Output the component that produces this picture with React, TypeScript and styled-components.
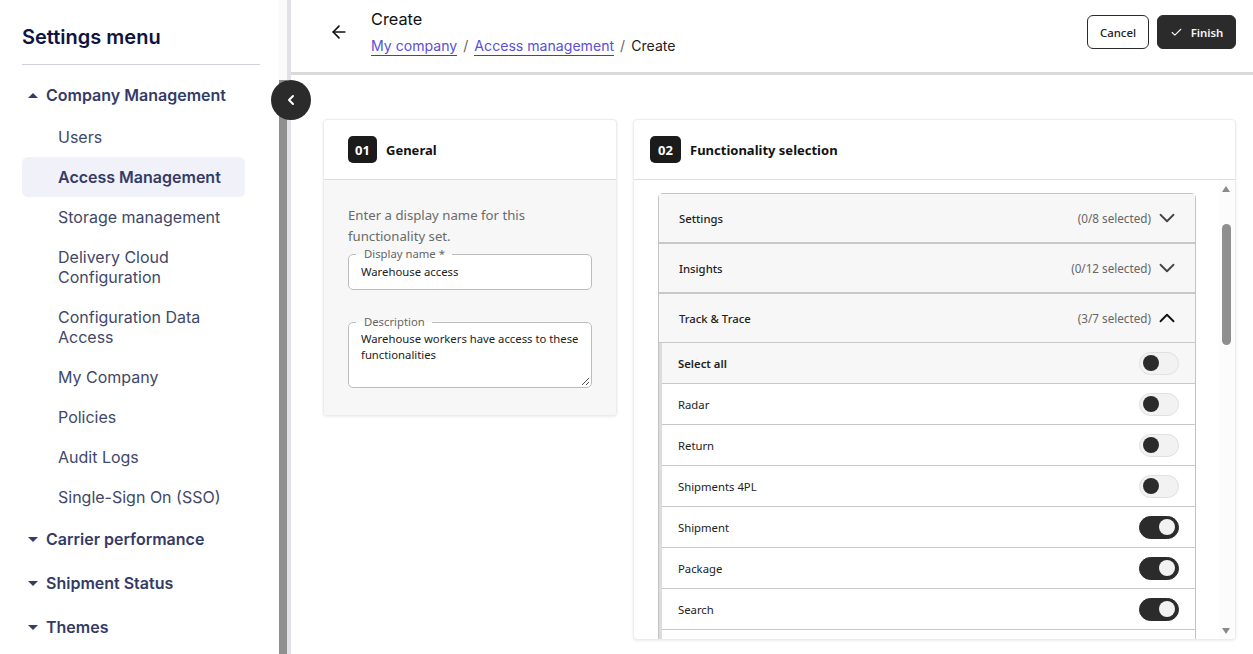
import React from "react";
import styled, { createGlobalStyle } from "styled-components";
import { ArrowLeft, Check, ChevronDown, ChevronLeft, ChevronUp } from "lucide-react";

const UI_FONT = `"Noto Sans", "Open Sans", sans-serif`;
const MENU_FONT = `Inter, "Liberation Sans", sans-serif`;

const GlobalStyle = createGlobalStyle`
  html, body { margin: 0; padding: 0; height: 100%; overflow: hidden; background: #fff; }
  #root { height: 100%; }
  * { box-sizing: border-box; }
`;

const Page = styled.div`
  position: relative;
  display: flex;
  width: 1253px;
  height: 654px;
  overflow: hidden;
`;

const Sidebar = styled.aside`
  flex: 0 0 279px;
  padding: 22px 0 0 22px;
  font-family: ${MENU_FONT};
  overflow: hidden;
`;

const SidebarTitle = styled.h1`
  width: 238px;
  margin: 0 0 8px;
  padding-bottom: 12px;
  border-bottom: 1px solid #cfd0dc;
  font-size: 20px;
  line-height: 30px;
  font-weight: 600;
  color: #0e1442;
`;

const Group = styled.div`
  display: flex;
  align-items: center;
  height: 44px;
  padding-left: 6px;
  gap: 8px;
  font-size: 16px;
  font-weight: 600;
  color: #343b66;
`;

const Caret = styled.span<{ $up?: boolean }>`
  width: 0;
  height: 0;
  border-left: 5px solid transparent;
  border-right: 5px solid transparent;
  ${(p) => (p.$up ? "border-bottom: 5px solid #343b66;" : "border-top: 5px solid #343b66;")}
`;

const SubList = styled.div`
  display: flex;
  flex-direction: column;
  width: 223px;
`;

const SubItem = styled.div<{ $active?: boolean }>`
  padding: 10px 12px 10px 36px;
  border-radius: 6px;
  font-size: 16px;
  line-height: 20px;
  font-weight: ${(p) => (p.$active ? 600 : 400)};
  color: ${(p) => (p.$active ? "#343b66" : "#414868")};
  background: ${(p) => (p.$active ? "#f0f1f9" : "transparent")};
`;

const SideScroll = styled.div`
  flex: 0 0 8px;
  display: flex;
  flex-direction: column;
  padding-top: 80px;
  background: #fafafa;
`;

const SideThumb = styled.div`
  flex: 1;
  background: #8f8f8f;
`;

const SideEdge = styled.div`
  flex: 0 0 4px;
  background: #e1e1e9;
`;

const CollapseButton = styled.button`
  position: absolute;
  left: 271px;
  top: 80px;
  display: flex;
  align-items: center;
  justify-content: center;
  width: 40px;
  height: 40px;
  padding: 0;
  border: 0;
  border-radius: 50%;
  background: #2b2b2b;
  color: #fff;
`;

const Main = styled.main`
  flex: 1;
  display: flex;
  flex-direction: column;
  min-width: 0;
`;

const Header = styled.header`
  display: flex;
  align-items: center;
  height: 75px;
  padding: 0 17px 8px 38px;
  border-bottom: 3px solid #dadada;
  font-family: ${MENU_FONT};
`;

const BackIcon = styled(ArrowLeft)`
  margin-right: 22px;
  color: #111;
`;

const HeaderText = styled.div`
  flex: 1;
  display: flex;
  flex-direction: column;
  gap: 8px;
`;

const HeaderTitle = styled.div`
  font-size: 16.3px;
  line-height: 20px;
  color: #111;
`;

const Crumbs = styled.div`
  display: flex;
  align-items: center;
  gap: 6px;
  font-size: 14.1px;
  line-height: 18px;
  color: #222;
`;

const CrumbLink = styled.a`
  color: #5b50d8;
  border-bottom: 1px solid #3f3fc4;
`;

const CrumbSep = styled.span`
  color: #666;
`;

const HeaderActions = styled.div`
  display: flex;
  gap: 8px;
  font-family: ${UI_FONT};
`;

const ActionButton = styled.button<{ $primary?: boolean }>`
  display: flex;
  align-items: center;
  justify-content: center;
  gap: 8px;
  height: 34px;
  padding: 0;
  width: ${(p) => (p.$primary ? "79px" : "62px")};
  border: 1px solid #2b2b2b;
  border-radius: 6px;
  font-family: inherit;
  font-size: 11.4px;
  font-weight: ${(p) => (p.$primary ? 600 : 500)};
  color: ${(p) => (p.$primary ? "#f5f5f5" : "#222")};
  background: ${(p) => (p.$primary ? "#2b2b2b" : "#fff")};
`;

const Content = styled.div`
  flex: 1;
  display: flex;
  align-items: flex-start;
  gap: 16px;
  min-height: 0;
  padding: 44px 17px 14px 32px;
  font-family: ${UI_FONT};
`;

const Card = styled.section<{ $width: number; $fill?: boolean }>`
  display: flex;
  flex-direction: column;
  flex: 0 0 ${(p) => p.$width}px;
  ${(p) => p.$fill && "height: 100%;"}
  border: 1px solid #ececec;
  border-radius: 4px;
  box-shadow: 0 1px 3px rgba(0, 0, 0, 0.08);
  background: #fff;
  overflow: hidden;
`;

const CardHead = styled.div<{ $pad: number }>`
  flex: 0 0 60px;
  display: flex;
  align-items: center;
  gap: 9px;
  padding-left: ${(p) => p.$pad}px;
  border-bottom: 1px solid #dedede;
  font-size: 13px;
  font-weight: 700;
  color: #111;
`;

const StepBadge = styled.span<{ $width: number }>`
  display: flex;
  align-items: center;
  justify-content: center;
  width: ${(p) => p.$width}px;
  height: 27px;
  border-radius: 5px;
  background: #1b1b1b;
  color: #fff;
  font-size: 13px;
  font-weight: 700;
`;

const GeneralBody = styled.div`
  display: flex;
  flex-direction: column;
  padding: 25px 24px 27px;
  background: #f7f7f7;
`;

const Hint = styled.p`
  margin: 0;
  font-size: 13.2px;
  line-height: 21px;
  color: #6a6a6a;
`;

const FieldWrap = styled.div<{ $gap: number }>`
  position: relative;
  margin-top: ${(p) => p.$gap}px;
`;

const Field = styled.fieldset<{ $height: number; $top: number }>`
  height: ${(p) => p.$height}px;
  margin: 0;
  padding: ${(p) => p.$top}px 12px 0;
  border: 1px solid #bcbcbc;
  border-radius: 5px;
  background: #fff;
  font-size: 11.3px;
  line-height: 16px;
  color: #222;
`;

const FieldLegend = styled.legend`
  margin-left: -5px;
  padding: 0 7px 0 8px;
  font-size: 11.3px;
  line-height: 12px;
  color: #666;
`;

const GripIcon = styled.svg`
  position: absolute;
  right: 2px;
  bottom: 2px;
`;

const SelectionBody = styled.div`
  flex: 1;
  display: flex;
  min-height: 0;
`;

const ListPane = styled.div`
  flex: 1;
  padding: 13px 23px 0 24px;
  overflow: hidden;
`;

const Accordion = styled.div`
  border: 1px solid #c4c4c4;
  border-radius: 5px 5px 0 0;
  border-bottom: 0;
`;

const SectionRow = styled.div`
  display: flex;
  align-items: center;
  height: 50px;
  padding: 0 21px 0 20px;
  border-bottom: 2px solid #c8c8c8;
  background: #f7f7f7;
  font-size: 11.3px;
  font-weight: 500;
  color: #222;
`;

const SectionName = styled.span`
  flex: 1;
`;

const SectionCount = styled.span`
  margin-right: 9px;
  font-size: 11.7px;
  font-weight: 400;
  color: #666;
`;

const SectionDown = styled(ChevronDown)`
  margin: 0 -6px;
  color: #444;
`;

const SectionUp = styled(ChevronUp)`
  margin: 0 -6px;
  color: #111;
`;

const Rows = styled.div`
  margin-top: -1px;
  border-left: 3px solid #dcdcdc;
`;

const OptionRow = styled.div<{ $head?: boolean }>`
  display: flex;
  align-items: center;
  justify-content: space-between;
  height: 41px;
  padding: 0 16px;
  border-bottom: 1px solid #c8c8c8;
  font-size: 11.3px;
  font-weight: ${(p) => (p.$head ? 600 : 400)};
  color: #222;
  background: ${(p) => (p.$head ? "#f7f7f7" : "#fff")};
`;

const Switch = styled.span<{ $on?: boolean }>`
  display: flex;
  align-items: center;
  justify-content: ${(p) => (p.$on ? "flex-end" : "flex-start")};
  width: 40px;
  height: 23px;
  padding: 0 3px;
  border: 1px solid ${(p) => (p.$on ? "#2b2b2b" : "#e0e0e0")};
  border-radius: 12px;
  background: ${(p) => (p.$on ? "#2b2b2b" : "#f2f2f2")};
`;

const Knob = styled.span<{ $on?: boolean }>`
  width: 16px;
  height: 16px;
  border-radius: 50%;
  background: ${(p) => (p.$on ? "#f2f2f2" : "#2b2b2b")};
`;

const ListScroll = styled.div`
  position: relative;
  flex: 0 0 16px;
  padding-top: 44px;
  background: #fcfcfc;
`;

const ListThumb = styled.div`
  width: 9px;
  height: 121px;
  margin-left: 3px;
  border-radius: 5px;
  background: #8f8f8f;
`;

const ScrollArrow = styled.span<{ $down?: boolean }>`
  position: absolute;
  left: 3px;
  ${(p) => (p.$down ? "bottom: 5px;" : "top: 6px;")}
  width: 0;
  height: 0;
  border-left: 4.5px solid transparent;
  border-right: 4.5px solid transparent;
  ${(p) => (p.$down ? "border-top: 6px solid #8a8a8a;" : "border-bottom: 6px solid #8a8a8a;")}
`;

const companyItems = [
  "Users",
  "Access Management",
  "Storage management",
  "Delivery Cloud Configuration",
  "Configuration Data Access",
  "My Company",
  "Policies",
  "Audit Logs",
  "Single-Sign On (SSO)",
];

// last row is only peeking in at the bottom of the card, its label is out of view
const options = [
  { name: "Radar", on: false },
  { name: "Return", on: false },
  { name: "Shipments 4PL", on: false },
  { name: "Shipment", on: true },
  { name: "Package", on: true },
  { name: "Search", on: true },
  { name: "", on: false },
];

const Toggle = ({ on }: { on?: boolean }) => (
  <Switch $on={on}>
    <Knob $on={on} />
  </Switch>
);

const App = () => {
  return (
    <>
      <GlobalStyle />
      <Page>
        <Sidebar>
          <SidebarTitle>Settings menu</SidebarTitle>
          <Group>
            <Caret $up />
            Company Management
          </Group>
          <SubList>
            {companyItems.map((item) => (
              <SubItem key={item} $active={item === "Access Management"}>
                {item}
              </SubItem>
            ))}
          </SubList>
          <Group>
            <Caret />
            Carrier performance
          </Group>
          <Group>
            <Caret />
            Shipment Status
          </Group>
          <Group>
            <Caret />
            Themes
          </Group>
        </Sidebar>
        <SideScroll>
          <SideThumb />
        </SideScroll>
        <SideEdge />
        <CollapseButton aria-label="Collapse menu">
          <ChevronLeft size={16} strokeWidth={3} />
        </CollapseButton>

        <Main>
          <Header>
            <BackIcon size={20} strokeWidth={2} />
            <HeaderText>
              <HeaderTitle>Create</HeaderTitle>
              <Crumbs>
                <CrumbLink>My company</CrumbLink>
                <CrumbSep>/</CrumbSep>
                <CrumbLink>Access management</CrumbLink>
                <CrumbSep>/</CrumbSep>
                <span>Create</span>
              </Crumbs>
            </HeaderText>
            <HeaderActions>
              <ActionButton>Cancel</ActionButton>
              <ActionButton $primary>
                <Check size={13} strokeWidth={2} />
                Finish
              </ActionButton>
            </HeaderActions>
          </Header>

          <Content>
            <Card $width={294}>
              <CardHead $pad={24}>
                <StepBadge $width={29}>01</StepBadge>
                General
              </CardHead>
              <GeneralBody>
                <Hint>Enter a display name for this functionality set.</Hint>
                <FieldWrap $gap={1}>
                  <Field $height={42} $top={4}>
                    <FieldLegend>Display name *</FieldLegend>
                    Warehouse access
                  </Field>
                </FieldWrap>
                <FieldWrap $gap={26}>
                  <Field $height={72} $top={3}>
                    <FieldLegend>Description</FieldLegend>
                    Warehouse workers have access to these functionalities
                  </Field>
                  <GripIcon width="9" height="9" viewBox="0 0 9 9">
                    <path d="M1 8 L8 1 M5 8 L8 5" stroke="#555" strokeWidth="1" fill="none" />
                  </GripIcon>
                </FieldWrap>
              </GeneralBody>
            </Card>

            <Card $width={603} $fill>
              <CardHead $pad={16}>
                <StepBadge $width={31}>02</StepBadge>
                Functionality selection
              </CardHead>
              <SelectionBody>
                <ListPane>
                  <Accordion>
                    <SectionRow>
                      <SectionName>Settings</SectionName>
                      <SectionCount>(0/8 selected)</SectionCount>
                      <SectionDown size={26} strokeWidth={1.7} />
                    </SectionRow>
                    <SectionRow>
                      <SectionName>Insights</SectionName>
                      <SectionCount>(0/12 selected)</SectionCount>
                      <SectionDown size={26} strokeWidth={1.7} />
                    </SectionRow>
                    <SectionRow>
                      <SectionName>Track &amp; Trace</SectionName>
                      <SectionCount>(3/7 selected)</SectionCount>
                      <SectionUp size={26} strokeWidth={1.7} />
                    </SectionRow>
                    <Rows>
                      <OptionRow $head>
                        Select all
                        <Toggle />
                      </OptionRow>
                      {options.map((option) => (
                        <OptionRow key={option.name}>
                          <span>{option.name}</span>
                          <Toggle on={option.on} />
                        </OptionRow>
                      ))}
                    </Rows>
                  </Accordion>
                </ListPane>
                <ListScroll>
                  <ScrollArrow />
                  <ListThumb />
                  <ScrollArrow $down />
                </ListScroll>
              </SelectionBody>
            </Card>
          </Content>
        </Main>
      </Page>
    </>
  );
};

export default App;
